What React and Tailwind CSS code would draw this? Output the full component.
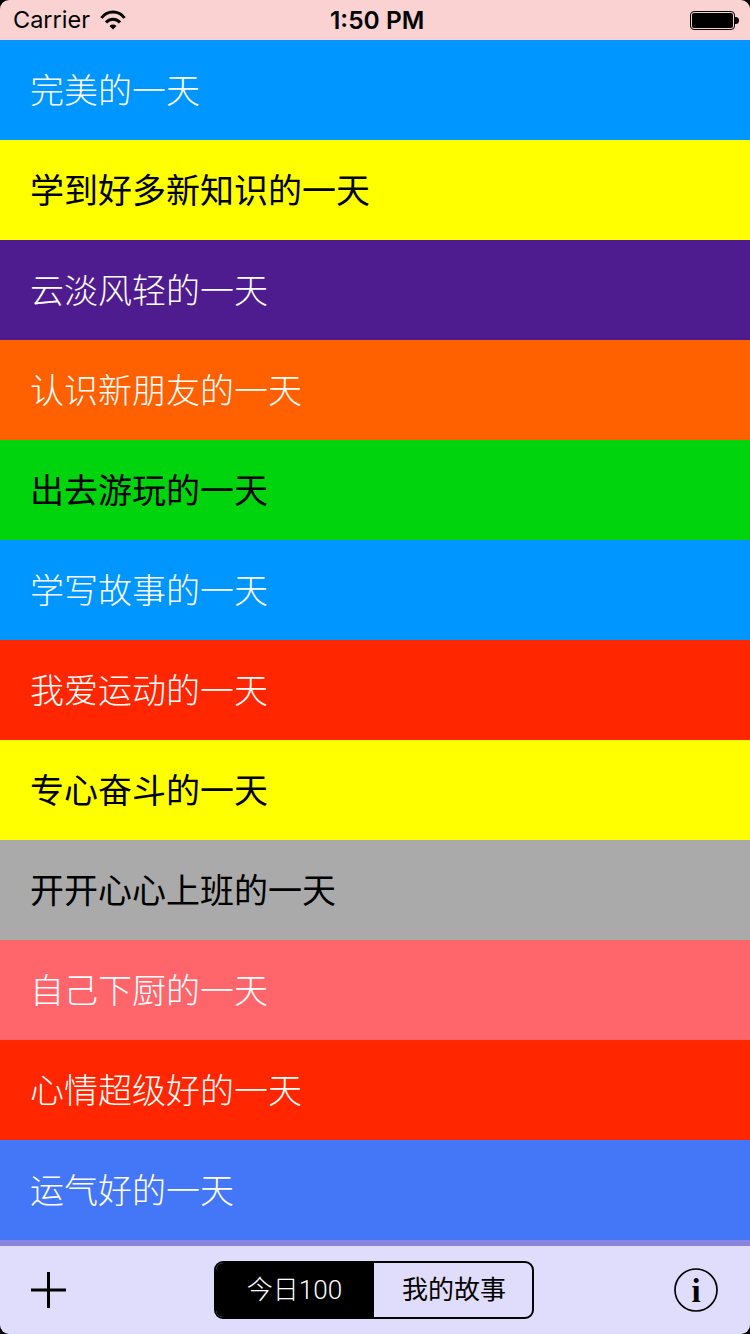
const rows = [
  { label: "完美的一天", bg: "bg-[#0096ff]", fg: "text-white font-light" },
  { label: "学到好多新知识的一天", bg: "bg-[#ffff00]", fg: "text-black" },
  { label: "云淡风轻的一天", bg: "bg-[#4f1c90]", fg: "text-white font-light" },
  { label: "认识新朋友的一天", bg: "bg-[#ff6000]", fg: "text-white font-light" },
  { label: "出去游玩的一天", bg: "bg-[#00d40c]", fg: "text-black" },
  { label: "学写故事的一天", bg: "bg-[#0096ff]", fg: "text-white font-light" },
  { label: "我爱运动的一天", bg: "bg-[#ff2600]", fg: "text-white font-light" },
  { label: "专心奋斗的一天", bg: "bg-[#ffff00]", fg: "text-black" },
  { label: "开开心心上班的一天", bg: "bg-[#aaaaaa]", fg: "text-black" },
  { label: "自己下厨的一天", bg: "bg-[#ff666c]", fg: "text-white font-light" },
  { label: "心情超级好的一天", bg: "bg-[#ff2600]", fg: "text-white font-light" },
  { label: "运气好的一天", bg: "bg-[#4477f8]", fg: "text-white font-light" },
];

const cjk = "font-['Noto_Sans_CJK_SC','Liberation_Sans',sans-serif]";

const App = () => {
  return (
    <div className={`w-[750px] h-[1334px] flex flex-col overflow-hidden relative ${cjk}`}>
      {/* status bar */}
      <div className="h-10 bg-[#fbd2d2] flex items-center justify-between pl-[13px] pr-[11px] text-black shrink-0 relative">
        <div className="flex items-center gap-[10px]">
          <span className="font-['Inter',sans-serif] text-[23.5px] leading-none">Carrier</span>
          <svg width="26" height="20" viewBox="0 0 26 20" fill="none" stroke="black" strokeWidth="3">
            <path d="M1.5 8a14 14 0 0 1 23 0" />
            <path d="M6 12.5a9 9 0 0 1 14 0" />
            <path d="M9.5 16l3.5 3.5 3.5-3.5a5 5 0 0 0-7 0z" fill="black" stroke="none" />
          </svg>
        </div>
        <span className="absolute left-[330px] top-[5px] font-['Inter',sans-serif] font-semibold text-[24.5px] leading-[30px]">1:50 PM</span>
        <div className="flex items-center">
          <div className="w-[45px] h-[19px] border border-black rounded-[4px] p-px">
            <div className="w-full h-full bg-black rounded-[2px]"></div>
          </div>
          <div className="w-[4px] h-[7px] bg-black rounded-r-sm"></div>
        </div>
      </div>

      {/* list */}
      {rows.map((r) => (
        <div key={r.label} className={`h-[100px] shrink-0 flex items-center pl-[30px] pb-1 text-[34px] ${r.bg} ${r.fg}`}>
          {r.label}
        </div>
      ))}

      {/* toolbar */}
      <div className="flex-1 bg-[#e0dcfb] border-t-[6px] border-[#8a84e0] flex items-center justify-between pl-[31px] pr-[32px]">
        <svg width="35" height="36" viewBox="0 0 35 36" stroke="black" strokeWidth="3">
          <path d="M17.5 0v36M0 18h35" />
        </svg>
        <div className="flex w-[320px] h-[58px] border-2 border-black rounded-[9px] overflow-hidden text-[26px] ml-[7px] font-['Roboto','Noto_Sans_CJK_SC',sans-serif]">
          <div className="w-[158px] bg-black text-white font-light flex items-center justify-center">今日100</div>
          <div className="flex-1 pl-[3px] text-black flex items-center justify-center">我的故事</div>
        </div>
        <svg width="44" height="44" viewBox="0 0 44 44">
          <circle cx="22" cy="22" r="21" fill="none" stroke="black" strokeWidth="1.7" />
          <text x="22" y="34" textAnchor="middle" fontFamily="Liberation Serif" fontWeight="bold" fontSize="33">i</text>
        </svg>
      </div>

      {/* screen corners */}
      <div className="absolute inset-0 rounded-[9px] shadow-[0_0_0_12px_black] pointer-events-none"></div>
    </div>
  );
};

export default App;
